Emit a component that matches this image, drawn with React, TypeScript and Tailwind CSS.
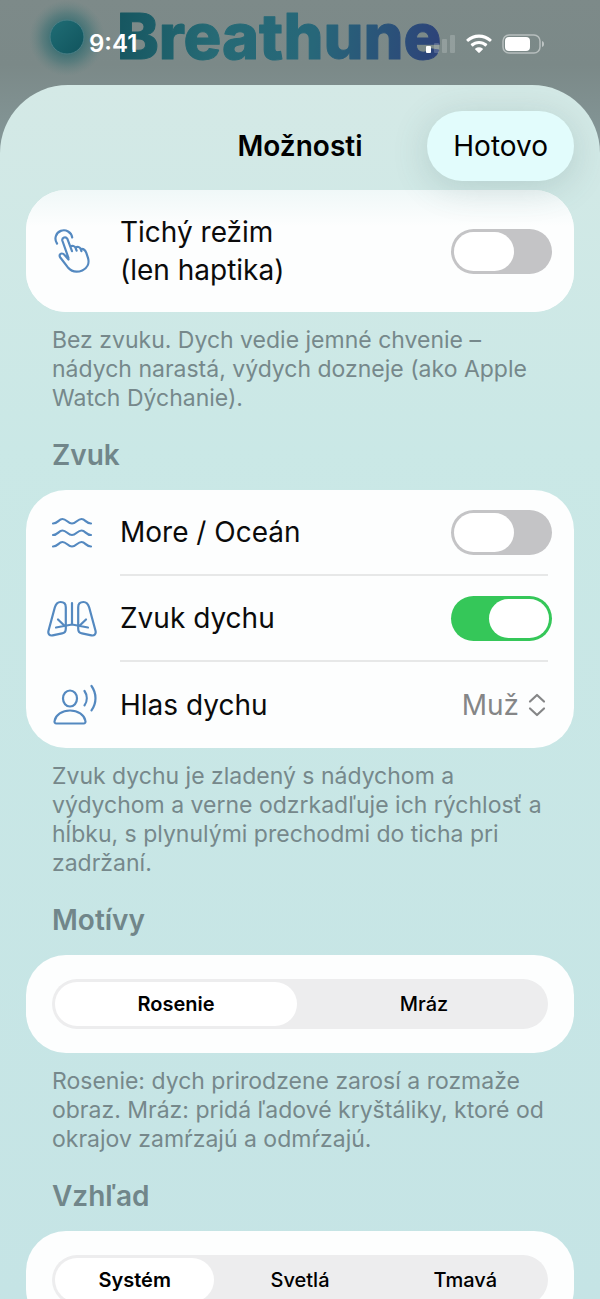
import React, { useState } from "react";

interface ToggleProps {
    id: string;
    defaultChecked?: boolean;
}

interface SegmentedProps {
    name: string;
    label: string;
    options: string[];
}

interface SectionProps {
    title?: string;
    note?: string;
    children: React.ReactNode;
}

interface RowProps {
    id: string;
    icon: React.ReactNode;
    label: React.ReactNode;
    divider?: boolean;
    children: React.ReactNode;
}

const iconProps = {
    fill: "none",
    stroke: "#5489c0",
    strokeWidth: 2.2,
    strokeLinecap: "round",
    strokeLinejoin: "round",
    "aria-hidden": true,
} as const;

const TapIcon = () => (
    <svg width="38" height="44" viewBox="0 0 38 44" {...iconProps}>
        <path d="M4 14.500A8.400 8.400 0 1 1 19.200 8.500" />
        <path d="M15.500 29 9.300 11.500a2.700 2.700 0 0 1 5-1.800l4.700 12.500M17.300 17.800c1.800-1.500 4.600-.9 5.300 1.200l1 2.700M22.600 18.500c1.900-1.300 4.300-.5 5 1.500l.8 2.200M27.800 20c2.800-.6 4.500 1.200 5.600 4.200l1.500 4.500c1.800 5.600-.6 10.500-5.600 12.700-5.400 2.300-11 1-14.600-3.200L7.300 28.500c-1.400-2-.4-4 1.500-4 1.300 0 2.200.7 3 1.700l3.700 4.300" />
    </svg>
);

const WavesIcon = () => (
    <svg width="42" height="32" viewBox="0 0 42 32" {...iconProps}>
        <path d="M2 6.500C7 6.500 7.500 2 11.500 2S17 6.500 21 6.500 26.500 2 30.500 2 35 6.500 40 6.500" />
        <path d="M2 18C7 18 7.500 13.500 11.500 13.500S17 18 21 18s5.500-4.500 9.500-4.500S35 18 40 18" />
        <path d="M2 29.500C7 29.500 7.500 25 11.500 25S17 29.500 21 29.500s5.500-4.500 9.500-4.500 4.500 4.500 9.500 4.500" />
    </svg>
);

const LungsIcon = () => (
    <svg width="50" height="38" viewBox="0 0 50 38" {...iconProps}>
        <path d="M7.800 7.500C9 3.500 10.500 2 13.500 2c3.300 0 5.300 2 5.300 5.200v21.500c0 2.600-1 4.200-3.700 4.700l-9.500 2c-3 .6-4.900-1.500-4.100-4.600z" />
        <path d="M42.200 7.500C41 3.500 39.500 2 36.500 2c-3.300 0-5.300 2-5.300 5.200v21.500c0 2.600 1 4.200 3.700 4.700l9.500 2c3 .6 4.900-1.500 4.100-4.600z" />
        <path d="M25 3v21M9 27.500 25 24.500l16 3M11 19.500l6 5.800M39 19.500l-6 5.800" />
    </svg>
);

const VoiceIcon = () => (
    <svg width="52" height="42" viewBox="-6 0 52 42" {...iconProps}>
        <ellipse cx="18" cy="14.500" rx="7" ry="8" />
        <path d="M4.500 39.500c-1.600 0-2.300-1.100-1.900-2.800C3.800 31 10 26.500 18 26.500S32.200 31 33.400 36.700c.4 1.700-.3 2.800-1.900 2.800z" />
        <path d="M32.500 7c3 4.300 3 10 0 14.300M39.500 2c5.300 7.400 5.300 17 0 24.300" />
    </svg>
);

const Toggle = ({ id, defaultChecked = false }: ToggleProps) => (
    <input
        id={id}
        type="checkbox"
        role="switch"
        defaultChecked={defaultChecked}
        className="
        -mr-1 flex h-[45px] w-[101px] shrink-0 appearance-none items-center rounded-full px-[3px]
        bg-[#c4c4c6] checked:bg-[#35c759] transition-colors cursor-pointer
        before:h-[39px] before:w-[60px] before:rounded-full before:bg-white before:content-['']
        checked:before:ml-auto
      "
    />
);

const Row = ({ id, icon, label, divider = false, children }: RowProps) => (
    <div className="flex items-center pl-[20px]">
        <span className="flex w-[52px] shrink-0 justify-center">{icon}</span>
        <div
            className={`ml-[22px] mr-[26px] flex min-h-[86px] flex-1 items-center justify-between gap-4 ${
                divider ? "border-b-2 border-[#e7e8e8]" : ""
            }`}
        >
            <label htmlFor={id} className="text-[28px] leading-[38px] text-[#0b0b0b]">
                {label}
            </label>
            {children}
        </div>
    </div>
);

const Section = ({ title, note, children }: SectionProps) => (
    <section>
        {title && (
            <h2 className="px-[26px] pt-[22px] pb-[15px] text-[28px] leading-[40px] font-semibold text-[#71868a]">
                {title}
            </h2>
        )}
        <div className="rounded-[40px] bg-[#fdfefe]">{children}</div>
        {note && (
            <p className="px-[26px] pt-[14px] text-[23px] leading-[29px] text-[#76888b]">{note}</p>
        )}
    </section>
);

const Segmented = ({ name, label, options }: SegmentedProps) => {
    const [selected, setSelected] = useState(options[0]);

    return (
        <div role="radiogroup" aria-label={label} className="px-[26px] py-6">
            <div className="flex h-[50px] gap-1.5 rounded-full bg-[#ededee] p-[3px]">
                {options.map((option) => (
                    <label
                        key={option}
                        className={`relative flex flex-1 cursor-pointer items-center justify-center rounded-full text-[20px] ${
                            selected === option ? "bg-white font-semibold" : "font-medium"
                        }`}
                    >
                        <input
                            type="radio"
                            name={name}
                            className="absolute inset-0 appearance-none rounded-full cursor-pointer"
                            checked={selected === option}
                            onChange={() => setSelected(option)}
                        />
                        {option}
                    </label>
                ))}
            </div>
        </div>
    );
};

const StatusBar = () => (
    <div className="absolute inset-x-0 top-0 flex h-[88px] items-center justify-between pl-[89px] pr-[55px] text-white">
        <span className="text-[24px] font-semibold">9:41</span>
        <div className="flex items-center gap-[10px]">
            {/* Signal */}
            <svg width="32" height="20" viewBox="0 0 32 20" fill="#fff" aria-hidden="true">
                <rect x="2" y="12" width="5" height="7" rx="1" />
                <rect x="10" y="9" width="5" height="10" rx="1" opacity=".18" />
                <rect x="18" y="5" width="5" height="14" rx="1" opacity=".18" />
                <rect x="26" y="1" width="5" height="18" rx="1" opacity=".18" />
            </svg>
            {/* Wi-Fi */}
            <svg width="26" height="20" viewBox="0 0 26 20" fill="#fff" aria-hidden="true">
                <path d="M13 .5C8.200.5 3.900 2.300.6 5.200c-.4.400-.4.900 0 1.300l1 1c.4.400.8.400 1.200 0C5.600 5.100 9.100 3.700 13 3.700s7.400 1.400 10.200 3.800c.4.400.8.400 1.200 0l1-1c.4-.4.400-.9 0-1.300C22.100 2.300 17.800.5 13 .5Z" />
                <path d="M13 6.900c-3 0-5.800 1.100-8 2.900-.4.400-.4.900 0 1.300l1.100 1.100c.3.300.8.300 1.200 0C8.900 10.900 10.900 10.100 13 10.100s4.100.8 5.700 2.100c.4.300.9.300 1.200 0L21 11.100c.4-.4.400-.9 0-1.300-2.200-1.800-5-2.900-8-2.900Z" />
                <path d="M13 13.200c-1.400 0-2.600.4-3.600 1.200-.5.400-.4.900-.1 1.200l3 3c.4.400 1 .4 1.400 0l3-3c.3-.3.400-.8-.1-1.200-1-.8-2.200-1.200-3.600-1.200Z" />
            </svg>
            {/* Battery */}
            <svg width="43" height="20" viewBox="0 0 43 20" aria-hidden="true">
                <rect x="1" y="1" width="37" height="18" rx="6" fill="none" stroke="#fff" strokeWidth="1.500" opacity=".45" />
                <rect x="3" y="3" width="25" height="14" rx="4" fill="#fff" />
                <path d="M40 7c2.700.6 2.700 5.400 0 6z" fill="#fff" opacity=".5" />
            </svg>
        </div>
    </div>
);

const Brand = () => (
    <svg width="600" height="85" viewBox="0 0 600 85" aria-label="Breathune" role="img">
        <defs>
            <linearGradient id="word" gradientUnits="userSpaceOnUse" x1="118" y1="20" x2="443" y2="60">
                <stop offset="0" stopColor="#165660" />
                <stop offset=".3" stopColor="#266a75" />
                <stop offset=".6" stopColor="#276779" />
                <stop offset="1" stopColor="#2d4179" />
            </linearGradient>
            <radialGradient id="halo">
                <stop offset=".3" stopColor="#1d6268" stopOpacity=".8" />
                <stop offset=".65" stopColor="#3a7073" stopOpacity=".5" />
                <stop offset="1" stopColor="#5c7f7e" stopOpacity="0" />
            </radialGradient>
            <linearGradient id="orb" x1="0" y1="0" x2="1" y2="1">
                <stop offset="0" stopColor="#206d75" />
                <stop offset="1" stopColor="#10545d" />
            </linearGradient>
        </defs>
        <circle cx="67" cy="38" r="38" fill="url(#halo)" />
        <circle cx="67" cy="37" r="17" fill="url(#orb)" stroke="#4b7f86" strokeWidth="1" />
        <text
            x="117"
            y="59"
            fontFamily="Inter, sans-serif"
            fontSize="63"
            fontWeight="800"
            fill="url(#word)"
            stroke="url(#word)"
            strokeWidth="1"
            strokeLinejoin="round"
        >
            Breathune
        </text>
    </svg>
);

export default function App() {
    return (
        <div className="flex h-screen flex-col bg-linear-to-b from-[#7d8a89] via-[#7b8988] via-5% to-[#8aa0a2] to-15% font-['Inter','Liberation_Sans',sans-serif] text-black">
            <div className="relative h-[85px] shrink-0 overflow-hidden">
                <Brand />
                <StatusBar />
            </div>

            <main className="flex min-h-0 flex-1 flex-col overflow-hidden rounded-t-[68px] bg-linear-to-b from-[#d4e9e6] via-[#cae8e6] via-30% to-[#c5e4e5]">
                <header className="relative z-10 grid h-[105px] shrink-0 grid-cols-[1fr_auto_1fr] items-center px-[26px] pt-4">
                    <h1 className="col-start-2 text-[28px] font-semibold">Možnosti</h1>
                    <button
                        type="button"
                        className="h-[70px] justify-self-end rounded-full bg-[#e2fcfc] px-[26px] text-[28px] shadow-[0_6px_36px_rgba(60,100,100,0.2)] cursor-pointer"
                    >
                        Hotovo
                    </button>
                </header>

                <div className="flex-1 overflow-y-auto px-[26px] pb-10 [scrollbar-width:none]">
                    <Section note="Bez zvuku. Dych vedie jemné chvenie – nádych narastá, výdych dozneje (ako Apple Watch Dýchanie).">
                        <div className="rounded-[40px] bg-linear-to-b from-[#f0f8f8] to-[#fdfefe] to-30% py-[18px]">
                            <Row
                                id="silent"
                                icon={<TapIcon />}
                                label={
                                    <>
                                        Tichý režim
                                        <br />
                                        (len haptika)
                                    </>
                                }
                            >
                                <Toggle id="silent" />
                            </Row>
                        </div>
                    </Section>

                    <Section
                        title="Zvuk"
                        note="Zvuk dychu je zladený s nádychom a výdychom a verne odzrkadľuje ich rýchlosť a hĺbku, s plynulými prechodmi do ticha pri zadržaní."
                    >
                        <Row id="ocean" icon={<WavesIcon />} label="More / Oceán" divider>
                            <Toggle id="ocean" />
                        </Row>
                        <Row id="breath" icon={<LungsIcon />} label="Zvuk dychu" divider>
                            <Toggle id="breath" defaultChecked />
                        </Row>
                        <Row id="voice" icon={<VoiceIcon />} label="Hlas dychu">
                            <div className="relative flex items-center text-[#858687]">
                                <select
                                    id="voice"
                                    defaultValue="Muž"
                                    className="field-sizing-content appearance-none bg-transparent pr-[29px] text-[28px]"
                                >
                                    <option>Muž</option>
                                </select>
                                <svg
                                    width="18"
                                    height="24"
                                    viewBox="0 0 18 24"
                                    fill="none"
                                    stroke="currentColor"
                                    strokeWidth="2.200"
                                    strokeLinecap="round"
                                    strokeLinejoin="round"
                                    className="pointer-events-none absolute right-0.5"
                                    aria-hidden="true"
                                >
                                    <path d="M2 8.500 9 2l7 6.500M2 15.500 9 22l7-6.500" />
                                </svg>
                            </div>
                        </Row>
                    </Section>

                    <Section
                        title="Motívy"
                        note="Rosenie: dych prirodzene zarosí a rozmaže obraz. Mráz: pridá ľadové kryštáliky, ktoré od okrajov zamŕzajú a odmŕzajú."
                    >
                        <Segmented name="theme" label="Motívy" options={["Rosenie", "Mráz"]} />
                    </Section>

                    <Section title="Vzhľad">
                        <Segmented name="appearance" label="Vzhľad" options={["Systém", "Svetlá", "Tmavá"]} />
                    </Section>
                </div>
            </main>
        </div>
    );
}
